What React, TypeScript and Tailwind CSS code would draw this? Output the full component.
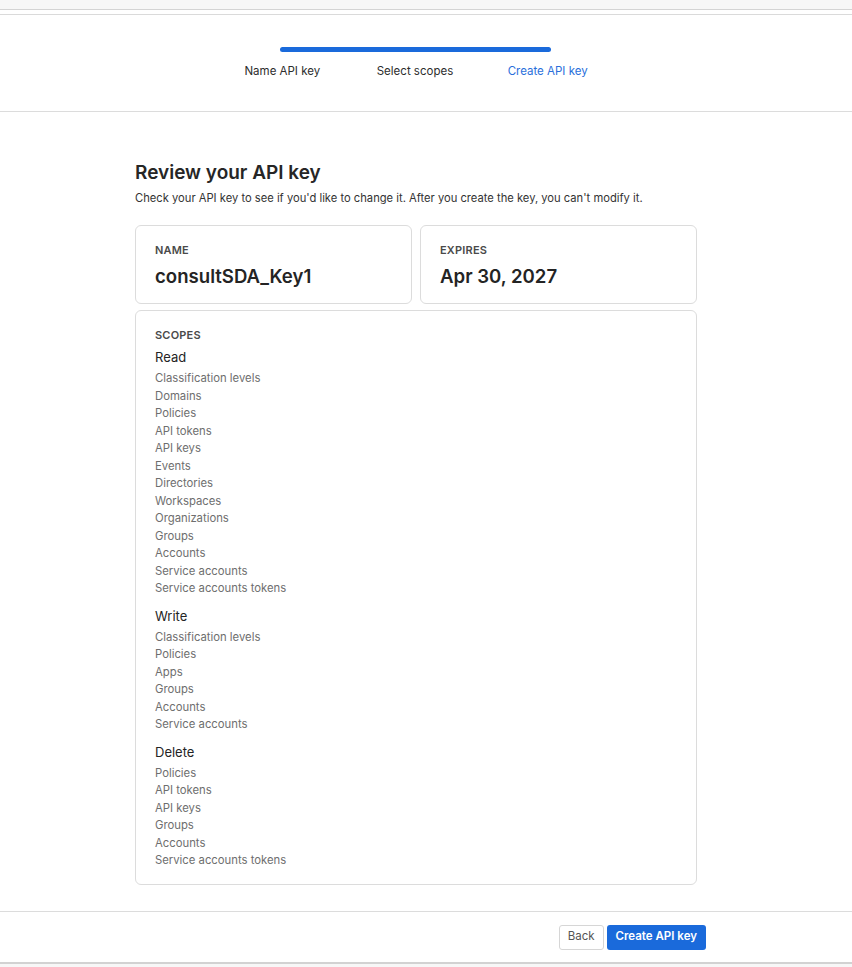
import React from 'react';

const scopes: { group: string; items: string[] }[] = [
  {
    group: 'Read',
    items: [
      'Classification levels',
      'Domains',
      'Policies',
      'API tokens',
      'API keys',
      'Events',
      'Directories',
      'Workspaces',
      'Organizations',
      'Groups',
      'Accounts',
      'Service accounts',
      'Service accounts tokens',
    ],
  },
  {
    group: 'Write',
    items: ['Classification levels', 'Policies', 'Apps', 'Groups', 'Accounts', 'Service accounts'],
  },
  {
    group: 'Delete',
    items: ['Policies', 'API tokens', 'API keys', 'Groups', 'Accounts', 'Service accounts tokens'],
  },
];

const steps = ['Name API key', 'Select scopes', 'Create API key'];

function SummaryCard({ label, value }: { label: string; value: string }) {
  return (
    <div className="flex-1 rounded-md border border-[#dcdcdc] px-[19px] pt-[16px] pb-[15px]">
      <div className="text-[11px] font-semibold leading-4 tracking-[0.2px] text-[#4a4a4a]">{label}</div>
      <div className="mt-[6px] text-[18.6px] font-semibold leading-6 text-[#242424]">{value}</div>
    </div>
  );
}

export default function App() {
  return (
    <div
      className="min-h-[967px] bg-[#f7f7f7] text-[#262626]"
      style={{ fontFamily: 'Inter, "Noto Sans", sans-serif' }}
    >
      {/* top strip of the parent page */}
      <div className="h-[10px] border-b border-[#d4d4d4]" />
      <div className="h-[5px] border-b border-[#dadada] bg-white" />

      {/* stepper */}
      <div className="flex h-[97px] flex-col items-center border-b border-[#dcdcdc] bg-white pr-[22px] pt-[32px]">
        <div className="h-[5px] w-[271px] rounded-full bg-[#1a6adb]" />
        <div className="mt-[11px] grid w-[398px] grid-cols-3 text-center text-[11.5px] leading-4">
          {steps.map((s, i) => (
            <span key={s} className={i === 2 ? 'text-[#2a6fdb]' : 'text-[#2d2d2d]'}>
              {s}
            </span>
          ))}
        </div>
      </div>

      {/* review body */}
      <div className="flex justify-center border-b border-[#dcdcdc] bg-white pr-[20px] pt-[49px] pb-[26px]">
        <div className="w-[562px]">
          <h1 className="text-[19px] font-semibold leading-6 text-[#262626]">Review your API key</h1>
          <p className="mt-[5px] text-[11.2px] leading-4 text-[#333]">
            Check your API key to see if you'd like to change it. After you create the key, you can't modify it.
          </p>

          <div className="mt-[19px] flex gap-[8px]">
            <SummaryCard label="NAME" value="consultSDA_Key1" />
            <SummaryCard label="EXPIRES" value="Apr 30, 2027" />
          </div>

          <div className="mt-[6px] rounded-md border border-[#dcdcdc] px-[19px] pt-[16px] pb-[14px]">
            <div className="text-[11px] font-semibold leading-4 tracking-[0.2px] text-[#4a4a4a]">SCOPES</div>
            <div className="mt-[4px] flex flex-col gap-[8px]">
              {scopes.map((g) => (
                <div key={g.group}>
                  <div className="text-[13px] leading-5 text-[#242424]">{g.group}</div>
                  <ul className="mt-[3px]">
                    {g.items.map((item, i) => (
                      <li key={i} className="text-[11.3px] leading-[17.5px] text-[#6e6e6e]">
                        {item}
                      </li>
                    ))}
                  </ul>
                </div>
              ))}
            </div>
          </div>
        </div>
      </div>

      {/* footer actions */}
      <div className="flex h-[52px] justify-center border-b-2 border-[#d2d2d2] bg-white pr-[20px]">
        <div className="flex w-[580px] items-center justify-end gap-[3px] pt-[1px]">
          <button className="h-[25px] rounded-[3px] border border-[#d6d6d6] bg-white px-[8px] text-[11.5px] text-[#555]">
            Back
          </button>
          <button className="h-[25px] rounded-[3px] bg-[#1a6adb] px-[9px] text-[11.5px] font-semibold text-white">
            Create API key
          </button>
        </div>
      </div>
    </div>
  );
}
